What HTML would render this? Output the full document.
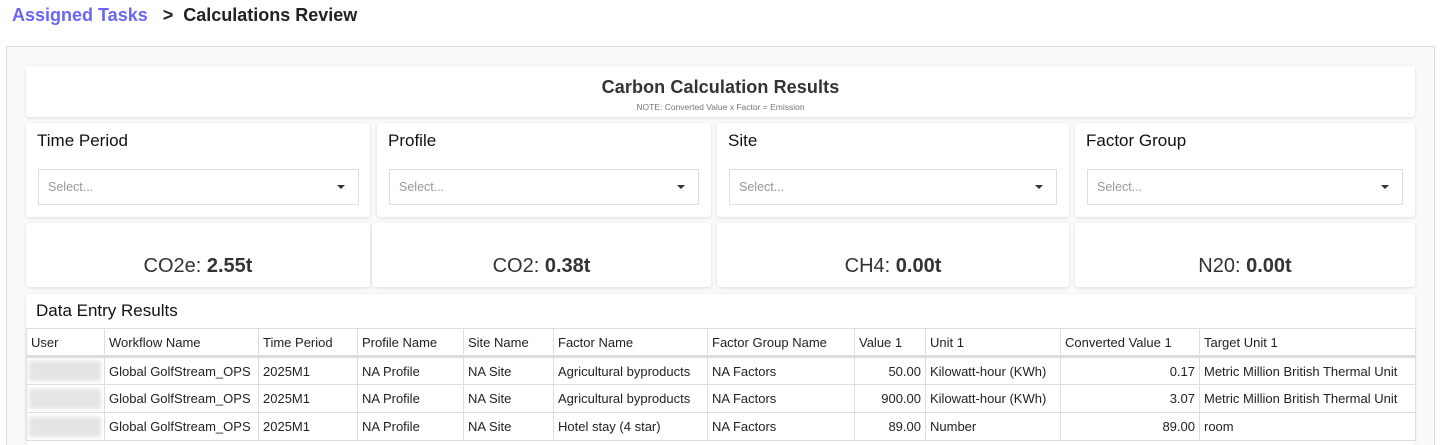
<!DOCTYPE html>
<html style="height:445px;overflow:hidden"><head><meta charset="utf-8"><style>
*{box-sizing:border-box;margin:0;padding:0}
body{width:1440px;height:445px;overflow:hidden;background:#fff;font-family:"Liberation Sans",sans-serif;position:relative}
.abs{position:absolute}
.crumb{top:5px;left:12px;font-size:18px;font-weight:bold;color:#222;white-space:nowrap}
.crumb .a{color:#6a66f5}
.panel{left:6px;top:46px;width:1429px;height:399px;border:1px solid #ddd;border-bottom:none;background:#fafafa}
.card{background:#fff;border-radius:3px;box-shadow:0 1px 3px rgba(0,0,0,.12)}
.title{text-align:center;color:#333}
.title b{display:block;font-size:18px;padding-top:11px;letter-spacing:.1px}
.title small{display:block;font-size:8.5px;color:#777;margin-top:4px}
.lbl{font-size:17px;color:#111;position:absolute;left:11px;top:8px}
.sel{position:absolute;height:36px;border:1px solid #ddd;font-size:12.5px;color:#999;padding:10px 0 0 9px}
.sel:after{content:"";position:absolute;right:13px;top:15px;border-left:4px solid transparent;border-right:4px solid transparent;border-top:4px solid #333}
.stat{font-size:20px;color:#333;text-align:center;padding-top:32px}
table{border-collapse:collapse;font-size:13px;color:#222;position:absolute;left:26px;top:328px;table-layout:fixed;width:1389px}
td{border:1px solid #ddd;height:28px;padding:0 4px;white-space:nowrap;overflow:hidden}
tr.h td{border-bottom:3px solid #ddd;height:28px}
td.r{text-align:right}
.blur{display:inline-block;width:72px;height:20px;background:#e4e4e4;filter:blur(2px);vertical-align:middle;margin-left:-2px}
</style></head><body>
<div class="abs crumb"><span class="a">Assigned Tasks</span>&nbsp;&nbsp; &gt;&nbsp; Calculations Review</div>
<div class="abs panel"></div>
<div class="abs card title" style="left:26px;top:66px;width:1389px;height:51px"><b>Carbon Calculation Results</b><small>NOTE: Converted Value x Factor = Emission</small></div>

<div class="abs card" style="left:26px;top:123px;width:344px;height:94px"><div class="lbl">Time Period</div><div class="sel" style="left:12px;top:46px;width:321px">Select...</div></div>
<div class="abs card" style="left:377px;top:123px;width:334px;height:94px"><div class="lbl">Profile</div><div class="sel" style="left:12px;top:46px;width:310px">Select...</div></div>
<div class="abs card" style="left:717px;top:123px;width:352px;height:94px"><div class="lbl">Site</div><div class="sel" style="left:12px;top:46px;width:328px">Select...</div></div>
<div class="abs card" style="left:1075px;top:123px;width:340px;height:94px"><div class="lbl">Factor Group</div><div class="sel" style="left:12px;top:46px;width:316px">Select...</div></div>

<div class="abs card stat" style="left:26px;top:223px;width:344px;height:64px">CO2e: <b>2.55t</b></div>
<div class="abs card stat" style="left:372px;top:223px;width:339px;height:64px">CO2: <b>0.38t</b></div>
<div class="abs card stat" style="left:717px;top:223px;width:352px;height:64px">CH4: <b>0.00t</b></div>
<div class="abs card stat" style="left:1075px;top:223px;width:340px;height:64px">N20: <b>0.00t</b></div>

<div class="abs card" style="left:26px;top:294px;width:1389px;height:151px"><div class="lbl" style="top:7px;left:10px">Data Entry Results</div></div>
<table>
<colgroup><col style="width:78px"><col style="width:154px"><col style="width:99px"><col style="width:106px"><col style="width:90px"><col style="width:154px"><col style="width:147px"><col style="width:71px"><col style="width:135px"><col style="width:139px"><col style="width:216px"></colgroup>
<tr class="h"><td>User</td><td>Workflow Name</td><td>Time Period</td><td>Profile Name</td><td>Site Name</td><td>Factor Name</td><td>Factor Group Name</td><td>Value 1</td><td>Unit 1</td><td>Converted Value 1</td><td>Target Unit 1</td></tr>
<tr><td><span class="blur"></span></td><td>Global GolfStream_OPS</td><td>2025M1</td><td>NA Profile</td><td>NA Site</td><td>Agricultural byproducts</td><td>NA Factors</td><td class="r">50.00</td><td>Kilowatt-hour (KWh)</td><td class="r">0.17</td><td>Metric Million British Thermal Unit</td></tr>
<tr><td><span class="blur"></span></td><td>Global GolfStream_OPS</td><td>2025M1</td><td>NA Profile</td><td>NA Site</td><td>Agricultural byproducts</td><td>NA Factors</td><td class="r">900.00</td><td>Kilowatt-hour (KWh)</td><td class="r">3.07</td><td>Metric Million British Thermal Unit</td></tr>
<tr><td><span class="blur"></span></td><td>Global GolfStream_OPS</td><td>2025M1</td><td>NA Profile</td><td>NA Site</td><td>Hotel stay (4 star)</td><td>NA Factors</td><td class="r">89.00</td><td>Number</td><td class="r">89.00</td><td>room</td></tr>
</table>
</body></html>
